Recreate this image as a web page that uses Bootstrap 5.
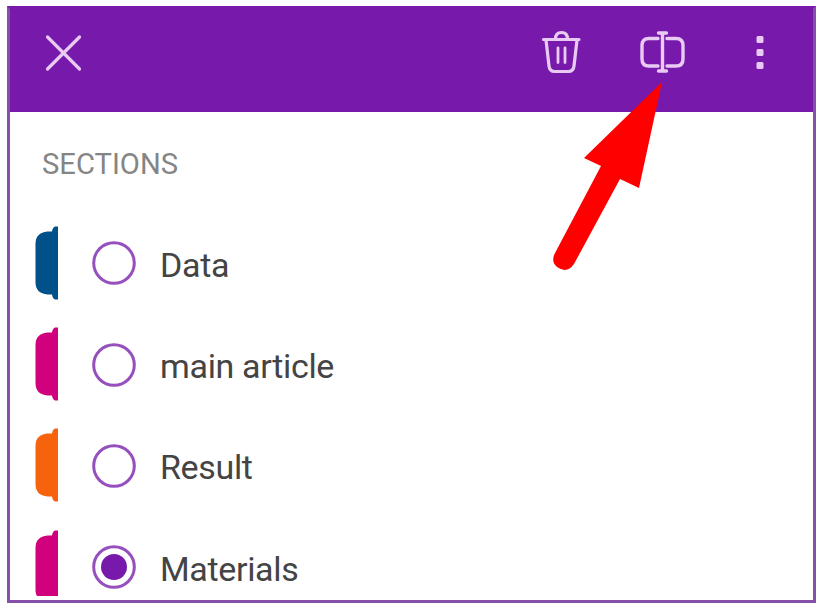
<!DOCTYPE html>
<html lang="en">
<head>
<meta charset="utf-8">
<meta name="viewport" content="width=device-width, initial-scale=1">
<title>Sections</title>
<link href="https://cdn.jsdelivr.net/npm/bootstrap@5.3.0/dist/css/bootstrap.min.css" rel="stylesheet">
<style>
body{font-family:Roboto,sans-serif;background:#fff;height:607px;overflow:hidden;padding:6px 10px 4px 7px}
.app-frame{border:3px solid #8650a8;border-top-color:#7719aa;height:597px;width:809px}
.app-bar{background:#7719aa;height:103px;margin:0 -3px;padding:0 34px 0 32px}
.app-bar svg{display:block}
.icon-btn{border:0;background:none;padding:0;color:#e8caf3}
.actions{gap:48px;padding-bottom:17px}
.rename-btn{margin-left:3px}
.close-btn{padding-bottom:16px}
.section-head{font-size:29.2px;line-height:36px;color:#858585;margin:34px 0 0 32px;padding-bottom:30px;font-weight:400}
.section-list{height:384px}
.section-row{height:101.4px;padding-left:25px;font-size:34px;letter-spacing:-.34px;line-height:40px;color:#444}
.row-label{padding-top:4px}
.tab-mark{width:24px;height:76px;flex:none}
.tab-blue{color:#00508a}.tab-pink{color:#d1007c}.tab-orange{color:#f7630c}
.section-radio{width:44px;height:44px;margin:1px 24px 0 33px;flex:none}
.pointer-arrow{left:550px;top:78px;pointer-events:none}
</style>
<script src="https://cdn.jsdelivr.net/npm/bootstrap@5.3.0/dist/js/bootstrap.bundle.min.js"></script>
</head>
<body class="m-0 position-relative">
<svg width="0" height="0" class="position-absolute" aria-hidden="true">
<symbol id="tab" viewBox="0 0 24 76"><path d="M23 1.500H20Q17.500 2.500 17 6.500H12.500Q0.500 7.500 0.500 19V57Q0.500 68.500 12.500 69.500H17Q17.500 73.500 20 74.500H23Z" fill="currentColor"/></symbol>
<symbol id="tab-cut" viewBox="0 0 24 76"><path d="M23 1.500H20Q17.500 2.500 17 6.500H12.500Q0.500 7.500 0.500 19V62Q1 68 6 71H23Z" fill="currentColor"/></symbol>
</svg>
<main class="app-frame overflow-hidden">
<header class="app-bar d-flex align-items-center justify-content-between">
<button class="icon-btn close-btn" aria-label="Close"><svg width="48" height="44" viewBox="0 0 48 44"><path d="M8.500 6L40.500 38M40.500 6L8.500 38" stroke="currentColor" stroke-width="3.2" stroke-linecap="round"/></svg></button>
<div class="actions d-flex align-items-center">
<button class="icon-btn" aria-label="Delete"><svg width="44" height="48" viewBox="0 0 44 48" fill="none" stroke="currentColor" stroke-width="3.2" stroke-linecap="round" stroke-linejoin="round"><path d="M4.500 11.5H40M7 12L10 38Q10.600 43.500 15.500 43.500H29.500Q34.400 43.500 35 38L38 12M16.500 11Q16.500 4.500 22.500 4.500Q28.500 4.500 28.500 11"/><path d="M19 20V34.500M26 20V34.500" stroke-width="2.800"/></svg></button>
<button class="icon-btn rename-btn" aria-label="Rename"><svg width="56" height="48" viewBox="0 0 56 48" fill="none" stroke="currentColor" stroke-width="3.400" stroke-linecap="round"><path d="M24 10.500H15Q8 10.500 8 17.500V31Q8 38 15 38H24M33 10.500H42Q49 10.500 49 17.500V31Q49 38 42 38H33M24.500 5H32.500M24.500 43H32.500M28.500 5V43"/></svg></button>
<button class="icon-btn" aria-label="More"><svg width="44" height="48" viewBox="0 0 44 48" fill="currentColor"><rect x="18.500" y="8" width="7" height="7" rx="1.500"/><rect x="18.500" y="21" width="7" height="7" rx="1.500"/><rect x="18.500" y="34" width="7" height="7" rx="1.500"/></svg></button>
</div>
</header>
<h1 class="section-head mb-0">SECTIONS</h1>
<div class="section-list overflow-hidden">
<div class="section-row d-flex align-items-center"><svg class="tab-mark tab-blue"><use href="#tab"/></svg><svg class="section-radio" viewBox="0 0 44 44"><circle cx="22" cy="22" r="20.300" fill="none" stroke="#9650bd" stroke-width="3"/></svg><span class="row-label">Data</span></div>
<div class="section-row d-flex align-items-center"><svg class="tab-mark tab-pink"><use href="#tab"/></svg><svg class="section-radio" viewBox="0 0 44 44"><circle cx="22" cy="22" r="20.300" fill="none" stroke="#9650bd" stroke-width="3"/></svg><span class="row-label">main article</span></div>
<div class="section-row d-flex align-items-center"><svg class="tab-mark tab-orange"><use href="#tab"/></svg><svg class="section-radio" viewBox="0 0 44 44"><circle cx="22" cy="22" r="20.300" fill="none" stroke="#9650bd" stroke-width="3"/></svg><span class="row-label">Result</span></div>
<div class="section-row d-flex align-items-center"><svg class="tab-mark tab-pink"><use href="#tab-cut"/></svg><svg class="section-radio" viewBox="0 0 44 44"><circle cx="22" cy="22" r="20.300" fill="none" stroke="#9650bd" stroke-width="3"/><circle cx="22" cy="22" r="13" fill="#7719aa"/></svg><span class="row-label">Materials</span></div>
</div>
</main>
<svg class="pointer-arrow position-absolute" width="120" height="200" viewBox="0 0 120 200" fill="#f00"><path d="M112 4L34 80L51 88L4.500 176Q1 184 7 189Q17 196 24 186L70 101L89 110Z"/></svg>
</body>
</html>
